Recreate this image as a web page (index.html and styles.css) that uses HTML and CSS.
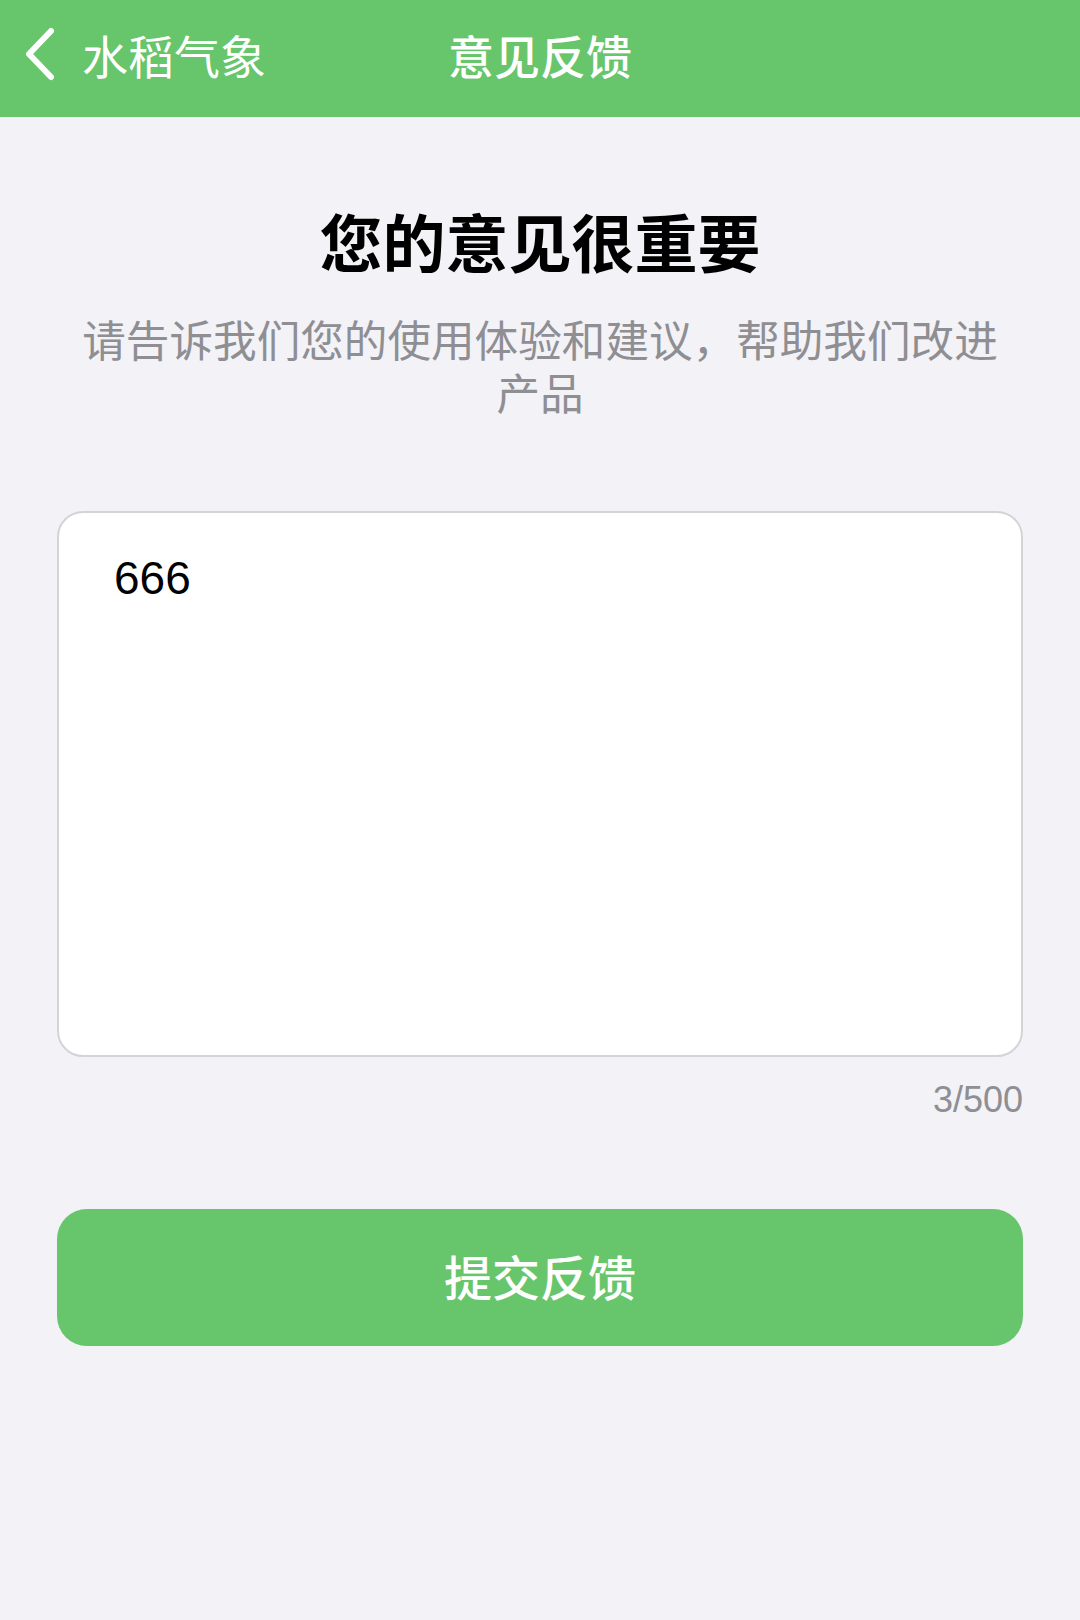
FILE: index.html
```html
<!DOCTYPE html>
<html lang="zh-CN">
<head>
    <meta charset="UTF-8">
    <meta name="viewport" content="width=device-width, initial-scale=1.0">
    <title>意见反馈</title>
    <link rel="stylesheet" href="styles.css">
</head>
<body>
    <div class="navbar">
        <a class="nav-back" href="#">
            <svg class="back-icon" width="40" height="56" viewBox="0 0 40 56">
                <polyline points="31,5 9,28 31,51" fill="none" stroke="#fff" stroke-width="6" stroke-linecap="round" stroke-linejoin="round"/>
            </svg>
            <span>水稻气象</span>
        </a>
        <div class="nav-title">意见反馈</div>
        <div></div>
    </div>

    <div class="page">
        <h1>您的意见很重要</h1>
        <p class="subtitle">请告诉我们您的使用体验和建议，帮助我们改进产品</p>

        <textarea class="feedback-input" maxlength="500">666</textarea>
        <div class="counter">3/500</div>

        <button class="submit-btn">提交反馈</button>
    </div>
</body>
</html>
```

FILE: styles.css
```css
body {
    margin: 0;
    background-color: #f2f2f7;
    font-family: "Liberation Sans", "Noto Sans CJK SC", sans-serif;
    color: #000;
}
.navbar {
    box-sizing: border-box;
    height: 117px;
    padding-bottom: 9px;
    background-color: #67c56b;
    display: grid;
    grid-template-columns: 1fr auto 1fr;
    align-items: center;
    color: white;
}
.nav-back {
    display: flex;
    align-items: center;
    gap: 22px;
    padding-left: 20px;
    color: white;
    text-decoration: none;
    font-size: 46px;
}
.back-icon {
    display: block;
}
.nav-title {
    font-size: 46px;
    font-weight: 500;
}
.page {
    padding: 0 57px;
}
h1 {
    margin: 85px 0 0;
    font-size: 63px;
    line-height: 87px;
    font-weight: 700;
    text-align: center;
}
.subtitle {
    max-width: 940px;
    margin: 27px auto 0;
    font-size: 43.6px;
    line-height: 53px;
    color: #8e8e93;
    text-align: center;
}
.feedback-input {
    display: block;
    box-sizing: border-box;
    width: 100%;
    height: 546px;
    margin-top: 89px;
    padding: 35px 55px;
    border: 2px solid #d4d4d8;
    border-radius: 26px;
    background: white;
    font-family: "Liberation Sans", "Noto Sans CJK SC", sans-serif;
    font-size: 46px;
    line-height: 60px;
    color: #000;
    resize: none;
    outline: none;
}
.counter {
    margin-top: 22px;
    text-align: right;
    font-size: 36px;
    line-height: 42px;
    color: #8e8e93;
}
.submit-btn {
    display: block;
    width: 100%;
    height: 137px;
    margin-top: 88px;
    padding-bottom: 6px;
    border: none;
    border-radius: 30px;
    background-color: #67c56b;
    color: white;
    font-family: "Liberation Sans", "Noto Sans CJK SC", sans-serif;
    font-size: 48px;
    font-weight: 500;
    cursor: pointer;
}
```
